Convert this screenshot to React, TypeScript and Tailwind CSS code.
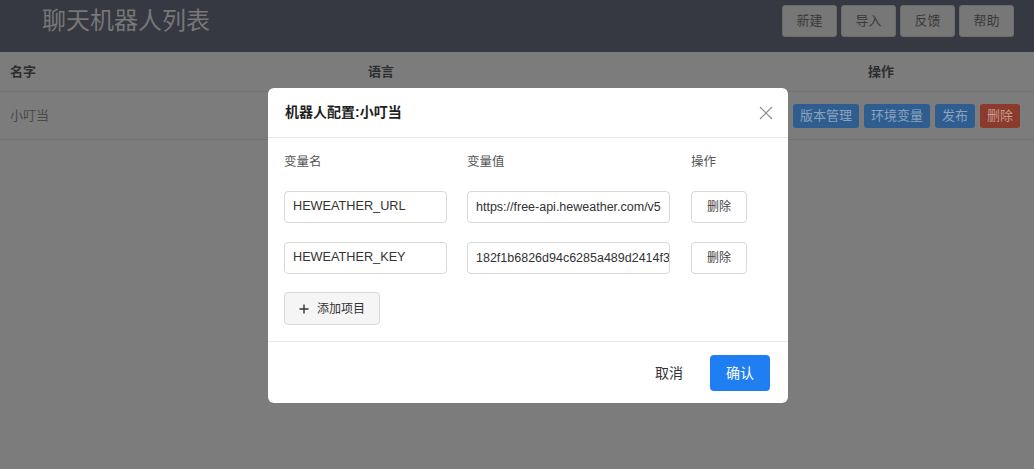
import React from 'react';

const font = "font-['Helvetica_Neue','Liberation_Sans','Noto_Sans_CJK_SC',sans-serif]";

const topButtons = ['新建', '导入', '反馈', '帮助'];

const rowActions = [
	{ label: '编辑', color: 'bg-[#2f5d8f] text-[#8aa3be]' },
	{ label: '版本管理', color: 'bg-[#2f5d8f] text-[#8aa3be]' },
	{ label: '环境变量', color: 'bg-[#2f5d8f] text-[#8aa3be]' },
	{ label: '发布', color: 'bg-[#2f5d8f] text-[#8aa3be]' },
	{ label: '删除', color: 'bg-[#8a3b2b] text-[#c89a90]' },
];

const envVars = [
	{ name: 'HEWEATHER_URL', value: 'https://free-api.heweather.com/v5' },
	{ name: 'HEWEATHER_KEY', value: '182f1b6826d94c6285a489d2414f3' },
];

const App = () => {
	return (
		<div className={`relative h-[469px] overflow-hidden bg-[#7c7c7c] ${font}`}>
			{/* page behind the dialog, already dimmed */}
			<header className="h-[52px] bg-[#363941]">
				<div className="flex h-[42px] items-center justify-between pl-[42px] pr-[20px]">
					<h1 className="text-[24px] leading-[32px] text-[#777777]">聊天机器人列表</h1>
					<div className="flex gap-[4px]">
						{topButtons.map((b) => (
							<button
								key={b}
								className="h-[32px] w-[55px] rounded-[3px] border border-[#6c6c6c] bg-[#777777] text-[13px] text-[#3a3a3a]"
							>
								{b}
							</button>
						))}
					</div>
				</div>
			</header>
			<div className="grid h-[40px] grid-cols-[358px_1fr_156px] items-center border-b border-[#717171] px-[10px] text-[13px] font-semibold text-[#2e2e2e]">
				<span>名字</span>
				<span>语言</span>
				<span>操作</span>
			</div>
			<div className="flex h-[48px] items-center justify-between border-b border-[#717171] pl-[10px] pr-[14px] text-[13px] text-[#4a4a4a]">
				<span>小叮当</span>
				<div className="flex gap-[5px]">
					{rowActions.map((a) => (
						<span
							key={a.label}
							className={`flex h-[24px] items-center rounded-[3px] px-[7px] text-[13px] ${a.color}`}
						>
							{a.label}
						</span>
					))}
				</div>
			</div>

			{/* dialog */}
			<div className="absolute inset-0 pl-[268px] pt-[88px]">
				<div className="w-[520px] rounded-[6px] bg-white">
					<div className="flex h-[50px] items-center justify-between border-b border-[#e8e8e8] pl-[17px] pr-[15px]">
						<span className="text-[14px] font-semibold text-[#1f1f1f]">机器人配置:小叮当</span>
						<svg width="14" height="14" viewBox="0 0 14 14" className="text-[#8c8c8c]">
							<path d="M1 1L13 13M13 1L1 13" stroke="currentColor" strokeWidth="1.2" />
						</svg>
					</div>
					<div className="px-[16px] pb-[16px] pt-[14px] text-[13px]">
						<div className="flex h-[20px] items-center text-[12.5px] text-[#555]">
							<span className="w-[183px]">变量名</span>
							<span className="w-[224px]">变量值</span>
							<span>操作</span>
						</div>
						<div className="mt-[19px] flex flex-col gap-[19px]">
							{envVars.map((v) => (
								<div key={v.name} className="flex items-center">
									<div className="flex h-[32px] w-[163px] items-center overflow-hidden whitespace-nowrap rounded-[4px] border border-[#d9d9d9] px-[8px] text-[12.7px] text-[#333]">
										{v.name}
									</div>
									<div className="ml-[20px] flex h-[32px] w-[203px] items-center overflow-hidden whitespace-nowrap rounded-[4px] border border-[#d9d9d9] pl-[8px] text-[12.5px] text-[#333]">
										{v.value}
									</div>
									<button className="ml-[21px] h-[32px] w-[56px] rounded-[4px] border border-[#d9d9d9] bg-white text-[12px] text-[#444]">
										删除
									</button>
								</div>
							))}
						</div>
						<button className="mt-[18px] flex h-[33px] w-[96px] items-center justify-center gap-[8px] rounded-[4px] border border-[#d9d9d9] bg-[#f5f5f5] text-[12px] text-[#333]">
							<svg width="10" height="10" viewBox="0 0 10 10">
								<path d="M5 0.5V9.5M0.5 5H9.5" stroke="#333" strokeWidth="1.4" />
							</svg>
							添加项目
						</button>
					</div>
					<div className="flex items-center justify-end border-t border-[#e8e8e8] pb-[12px] pr-[18px] pt-[13px]">
						<button className="h-[36px] w-[60px] text-[14px] text-[#333]">取消</button>
						<button className="ml-[11px] h-[36px] w-[60px] rounded-[4px] bg-[#1f7ff2] text-[14px] text-white">
							确认
						</button>
					</div>
				</div>
			</div>
		</div>
	);
};

export default App;
